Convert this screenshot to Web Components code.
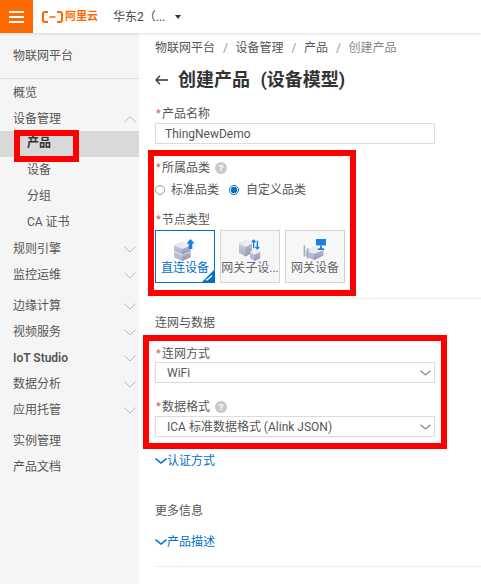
<!DOCTYPE html>
<html lang="zh"><head><meta charset="utf-8"><title>创建产品</title>
<style>
html,body{margin:0;padding:0;background:#fff}
body{font:12px/18px Roboto,"Noto Sans CJK SC",sans-serif;color:#555;width:481px;height:584px;overflow:hidden}
</style></head><body>
<app-page>
  <top-bar slot="top"></top-bar>
  <side-nav slot="nav">
    <nav-item title-row>物联网平台</nav-item>
    <nav-item>概览</nav-item>
    <nav-item chevron="up">设备管理</nav-item>
    <nav-item sub active>产品</nav-item>
    <nav-item sub>设备</nav-item>
    <nav-item sub>分组</nav-item>
    <nav-item sub>CA 证书</nav-item>
    <nav-item chevron="down">规则引擎</nav-item>
    <nav-item chevron="down" gap>监控运维</nav-item>
    <nav-item chevron="down">边缘计算</nav-item>
    <nav-item chevron="down">视频服务</nav-item>
    <nav-item chevron="down" strong>IoT Studio</nav-item>
    <nav-item chevron="down">数据分析</nav-item>
    <nav-item chevron="down" gap>应用托管</nav-item>
    <nav-item>实例管理</nav-item>
    <nav-item>产品文档</nav-item>
  </side-nav>
  <product-form slot="main"></product-form>
  <red-frame slot="marks" style="left:14px;top:130px;width:53px;height:20px"></red-frame>
  <red-frame slot="marks" style="left:148px;top:150px;width:196px;height:134px"></red-frame>
  <red-frame slot="marks" style="left:143px;top:335px;width:292px;height:102px"></red-frame>
</app-page>
<script>
const el=(tag,html)=>{customElements.define(tag,class extends HTMLElement{
  constructor(){super();this.attachShadow({mode:'open'}).innerHTML=typeof html==='function'?html(this):html}
})};
const chev=(dir,c,w=12,h=6,sw=1)=>`<svg width="${w}" height="${h+1}" viewBox="0 0 ${w} ${h+1}" fill="none" stroke="${c}" stroke-width="${sw}">${dir==='up'?`<path d="M.5 ${h}L${w/2} .7L${w-.5} ${h}"/>`:`<path d="M.5 .7L${w/2} ${h}L${w-.5} .7"/>`}</svg>`;

el('app-page',`<style>
:host{display:block;position:relative;width:481px;height:584px;overflow:hidden}
.row{display:flex;height:551px}
</style><slot name="top"></slot><div class="row"><slot name="nav"></slot><slot name="main"></slot></div><slot name="marks"></slot>`);

el('top-bar',`<style>
:host{display:flex;align-items:center;height:33px;position:relative;z-index:1;background:#fff;box-shadow:0 1px 3px rgba(0,0,0,.12);color:#444}
.burger{width:33px;height:33px;background:#ff6a00;display:flex;flex-direction:column;gap:3px;align-items:center;justify-content:center}
.burger i{display:block;width:15px;height:2px;background:#fff}
.logo{display:flex;align-items:center;margin-left:9px;gap:2px;color:#ff6a00;font-weight:700;font-size:11px;line-height:14px}
.logo svg{display:block}
.region{margin-left:15px;width:58px;white-space:nowrap}
.caret{width:0;height:0;border:3.5px solid transparent;border-top:4px solid #333;border-bottom:0;margin-left:4px}
</style><div class="burger"><i></i><i></i><i></i></div>
<div class="logo"><svg width="21" height="12" viewBox="0 0 21 12" fill="none" stroke="#ff6a00" stroke-width="2"><path d="M6 1H3Q1 1 1 3V9Q1 11 3 11H6M15 1H18Q20 1 20 3V9Q20 11 18 11H15"/><path d="M7.5 6H13.5" stroke-width="1.6"/></svg><span>阿里云</span></div>
<div class="region">华东2（...</div><div class="caret"></div>`);

el('side-nav',`<style>
:host{display:block;width:139px;flex:none;background:#f5f5f5;height:551px}
</style><slot></slot>`);

el('nav-item',h=>{
  const c=h.getAttribute('chevron');
  return `<style>
:host{display:flex;align-items:center;justify-content:space-between;box-sizing:border-box;height:26px;padding:2px 3px 0 13px;color:#555;white-space:nowrap}
:host([sub]){padding:0 3px 0 27px}
:host([active]){background:#d9d9d9;color:#333;font-weight:700;padding-bottom:2px}
:host([gap]){margin-bottom:5px}
:host([strong]){font-weight:600}
:host([title-row]){height:46px;padding-top:0;border-bottom:1px solid #dcdcdc}
svg{display:block}
</style><span><slot></slot></span>${c?chev(c,'#b8b8b8'):''}`});

el('red-frame',`<style>
:host{display:block;position:absolute;border:6px solid #f00;box-sizing:content-box;pointer-events:none}
</style>`);

el('form-label',h=>`<style>
:host{display:flex;align-items:center;height:18px;color:#555}
b{color:#d9534f;font-weight:400;font-size:11px;width:6px;margin-left:1px;flex:none}
span.q{width:12px;height:12px;border-radius:50%;background:#c9c9c9;color:#fff;font:700 9px/12px "Liberation Sans",sans-serif;text-align:center;margin-left:5px}
</style><b>*</b><slot></slot>${h.hasAttribute('help')?'<span class="q">?</span>':''}`);

el('text-box',h=>`<style>
:host{display:flex;align-items:center;justify-content:space-between;box-sizing:border-box;width:280px;height:21px;border:1px solid #dcdcdc;padding:0 2px 0 ${h.hasAttribute('select')?'11':'9'}px;color:#555;background:#fff;white-space:nowrap}
svg{display:block;margin-right:1px}
</style><span><slot></slot></span>${h.hasAttribute('select')?chev('down','#888',11,5,1.2):''}`);

el('radio-opt',h=>`<style>
:host{display:inline-flex;align-items:center;color:#555}
i{box-sizing:border-box;width:10px;height:10px;border-radius:50%;border:1px solid #999;margin-right:${h.getAttribute('gap')||7}px;background:#fff}
:host([on]) i{border-color:#0070cc;background:radial-gradient(circle,#0070cc 0 2.9px,#fff 3.4px)}
</style><i></i><slot></slot>`);

const iconDefs=id=>`<defs>
<linearGradient id="t${id}" x1="0" y1="0" x2="1" y2="0"><stop offset="0" stop-color="#dfe2ee"/><stop offset="1" stop-color="#f4f5fa"/></linearGradient>
<linearGradient id="l${id}" x1="0" y1="0" x2="0" y2="1"><stop offset="0" stop-color="#d3d6e4"/><stop offset="1" stop-color="#a9adc6"/></linearGradient>
<linearGradient id="r${id}" x1="0" y1="0" x2="0" y2="1"><stop offset="0" stop-color="#b6bad0"/><stop offset="1" stop-color="#8f94b2"/></linearGradient></defs>`;
const ICONS={
 direct:`${iconDefs('a')}
 <path d="M1 14L10 10L19 14V20L10 24L1 20Z" fill="url(#la)"/><path d="M10 16L19 12.5V20L10 24Z" fill="url(#ra)"/><path d="M1 14L10 10L19 14L10 18Z" fill="#e8eaf3"/>
 <path d="M1 7L10 3L19 7V13L10 17L1 13Z" fill="url(#la)"/><path d="M10 10L19 7V13L10 17Z" fill="url(#ra)"/><path d="M1 7L10 3L19 7L10 11Z" fill="url(#ta)"/>
 <path d="M19 0L23.5 5H21V11H17V5H14.5Z" fill="#1b7fe0"/>`,
 sub:`${iconDefs('b')}
 <path d="M1 5L8 1L15 5V15L8 19L1 15Z" fill="url(#lb)"/><path d="M8 8.500L15 5V15L8 19Z" fill="url(#rb)"/><path d="M1 5L8 1L15 5L8 9Z" fill="url(#tb)"/>
 <path d="M13 14L18 11.500L24 14V21L18 24L13 21Z" fill="url(#lb)"/><path d="M18 17L24 14V21L18 24Z" fill="url(#rb)"/><path d="M13 14L18 11.500L24 14L18 17Z" fill="#eef0f7"/>
 <path d="M17.500 1V10M17.500 1L15.500 3.500M17.500 1L19.500 3.500" fill="none" stroke="#1b7fe0" stroke-width="1.500" transform="translate(-.5 0)"/>
 <path d="M21 11V2M21 11L19 8.500M21 11L23 8.500" fill="none" stroke="#1b7fe0" stroke-width="1.500"/>`,
 gate:`${iconDefs('c')}
 <path d="M3 13L12 8L22 12V18L12 23L3 19Z" fill="url(#lc)"/><path d="M12 15L22 12V18L12 23Z" fill="url(#rc)"/><path d="M3 13L12 8L22 12L12 16Z" fill="url(#tc)"/>
 <path d="M1.500 7V19M5 10V21" stroke="#a6aac4" stroke-width="1.800"/>
 <rect x="14" y="0" width="11" height="7" fill="#1b7fe0"/><path d="M19.500 7V10M16 11H23" stroke="#1b7fe0" stroke-width="2"/>`
};
el('node-card',h=>`<style>
:host{display:flex;flex-direction:column;align-items:center;box-sizing:border-box;width:60px;height:53px;border:1px solid #d4d4d4;background:#f7f7f7;position:relative;color:#666;padding-top:8px;overflow:hidden}
:host([on]){border-color:#0070cc;color:#0070cc;background:#fff}
svg.i{display:block;flex:none}
span{display:block;width:100%;text-align:center;white-space:nowrap;line-height:16px;margin-top:-1px;position:relative}
.tri{position:absolute;right:0;bottom:0;width:0;height:0;border-left:12px solid transparent;border-bottom:12px solid #0070cc}
svg.c{position:absolute;right:1px;bottom:1px}
</style><svg class="i" width="24" height="22" viewBox="0 0 26 24">${ICONS[h.getAttribute('icon')]}</svg><span><slot></slot></span>${h.hasAttribute('on')?'<div class="tri"></div><svg class="c" width="8" height="7" viewBox="0 0 8 7" fill="none" stroke="#fff" stroke-width="1.300"><path d="M1 5.500L2 6L7 1.500"/></svg>':''}`);

el('more-link',`<style>
:host{display:flex;align-items:center;height:18px;color:#0070cc}
svg{display:block;flex:none}
</style>${chev('down','#0070cc',12,5,1.5)}<slot></slot>`);

el('product-form',`<style>
:host{display:block;flex:1;min-width:0;padding-left:16px;color:#555}
.crumb{margin-top:5px;height:20px;line-height:20px;display:flex;gap:8px;white-space:nowrap}
.crumb em{font-style:normal;color:#999;width:4.5px;text-align:center}
.crumb .cur{color:#888}
.head{margin-top:12px;height:20px;display:flex;align-items:center;color:#333}
.head h1{margin:0 0 0 10px;font-size:18px;line-height:20px;font-weight:700;white-space:nowrap;word-spacing:6px}
.head svg{display:block}
.s1{margin-top:15px}
.s2{margin-top:15px}
.radios{margin-top:4px;height:18px;display:flex;gap:10px}
.s3{margin-top:12px}
.cards{display:flex;gap:5px;margin-top:1px}
hr{margin:15px 0 0;border:0;border-top:1px solid #eee}
.sec{margin-top:15px;height:18px;color:#555}
.s4{margin-top:13px}
.s4 form-label{height:17px}
.s5{margin-top:15px}
.a{margin-top:15px}
.b{margin-top:32px}
.c{margin-top:13px}
.d{margin-top:15px}
</style>
<div class="crumb"><span>物联网平台</span><em>/</em><span>设备管理</span><em>/</em><span>产品</span><em>/</em><span class="cur">创建产品</span></div>
<div class="head"><svg width="13" height="10" viewBox="0 0 13 10" fill="none" stroke="#333" stroke-width="1.300"><path d="M13 5H1M5 .8L1 5L5 9.200"/></svg><h1>创建产品 (设备模型)</h1></div>
<div class="s1"><form-label>产品名称</form-label><text-box>ThingNewDemo</text-box></div>
<div class="s2"><form-label help>所属品类</form-label>
<div class="radios"><radio-opt gap="6">标准品类</radio-opt><radio-opt on>自定义品类</radio-opt></div></div>
<div class="s3"><form-label>节点类型</form-label>
<div class="cards"><node-card on icon="direct">直连设备</node-card><node-card icon="sub">网关子设...</node-card><node-card icon="gate">网关设备</node-card></div></div>
<hr>
<div class="sec">连网与数据</div>
<div class="s4"><form-label>连网方式</form-label><text-box select>WiFi</text-box></div>
<div class="s5"><form-label help>数据格式</form-label><text-box select>ICA 标准数据格式 (Alink JSON)</text-box></div>
<more-link class="a">认证方式</more-link>
<div class="sec b">更多信息</div>
<more-link class="c">产品描述</more-link>
<hr class="d">`);
</script>
</body></html>
